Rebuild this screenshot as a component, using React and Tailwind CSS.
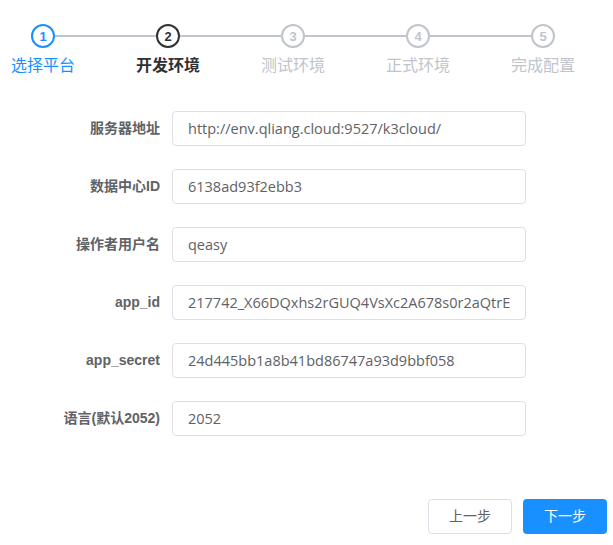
import React from "react";

const steps = [
  { n: 1, label: "选择平台", state: "done" },
  { n: 2, label: "开发环境", state: "active" },
  { n: 3, label: "测试环境", state: "wait" },
  { n: 4, label: "正式环境", state: "wait" },
  { n: 5, label: "完成配置", state: "wait" },
];

const fields = [
  ["服务器地址", "http://env.qliang.cloud:9527/k3cloud/"],
  ["数据中心ID", "6138ad93f2ebb3"],
  ["操作者用户名", "qeasy"],
  ["app_id", "217742_X66DQxhs2rGUQ4VsXc2A678s0r2aQtrE"],
  ["app_secret", "24d445bb1a8b41bd86747a93d9bbf058"],
  ["语言(默认2052)", "2052"],
];

function Step({ s, first, last }) {
  const circle =
    s.state === "done"
      ? "border-[#1890ff] text-[#1890ff]"
      : s.state === "active"
      ? "border-[#303133] text-[#303133]"
      : "border-[#c0c4cc] text-[#c0c4cc]";
  const label =
    s.state === "done"
      ? "text-[#1890ff]"
      : s.state === "active"
      ? "text-[#303133] font-bold"
      : "text-[#c0c4cc]";
  return (
    <div className="w-[125px] flex flex-col items-center">
      <div className="flex items-center w-full h-[24px]">
        <div className={`flex-1 h-[2px] ${first ? "" : "bg-[#c0c4cc]"}`} />
        <div
          className={`w-[24px] h-[24px] rounded-full border-2 bg-white flex items-center justify-center text-[13px] font-bold leading-none ${circle}`}
        >
          {s.n}
        </div>
        <div className={`flex-1 h-[2px] ${last ? "" : "bg-[#c0c4cc]"}`} />
      </div>
      <div className={`mt-[7px] text-[16px] leading-[22px] ${label}`}>{s.label}</div>
    </div>
  );
}

export default function App() {
  return (
    <div
      className="w-[613px] h-[545px] bg-white relative"
      style={{ fontFamily: '"Liberation Sans", "Noto Sans CJK SC", sans-serif' }}
    >
      <div className="pt-[24px] flex ml-[-19.5px]">
        {steps.map((s, i) => (
          <Step key={s.n} s={s} first={i === 0} last={i === steps.length - 1} />
        ))}
      </div>
      <div className="mt-[34px] flex flex-col gap-[23px]">
        {fields.map(([k, v]) => (
          <div key={k} className="flex items-center">
            <div className="w-[160px] text-right text-[14px] font-bold text-[#606266]">{k}</div>
            <div className="ml-[12px] w-[354px] h-[35px] border border-[#dcdfe6] rounded-[4px] flex items-center px-[15px] text-[14.5px] text-[#606266] whitespace-nowrap overflow-hidden font-['Open_Sans','Noto_Sans_CJK_SC',sans-serif]">
              {v}
            </div>
          </div>
        ))}
      </div>
      <div className="absolute left-[428px] top-[499px] flex gap-[11px]">
        <button className="w-[84px] h-[35px] border border-[#dcdfe6] rounded-[4px] text-[14px] text-[#606266] bg-white">
          上一步
        </button>
        <button className="w-[84px] h-[35px] rounded-[4px] text-[14px] text-white bg-[#1890ff]">
          下一步
        </button>
      </div>
    </div>
  );
}
